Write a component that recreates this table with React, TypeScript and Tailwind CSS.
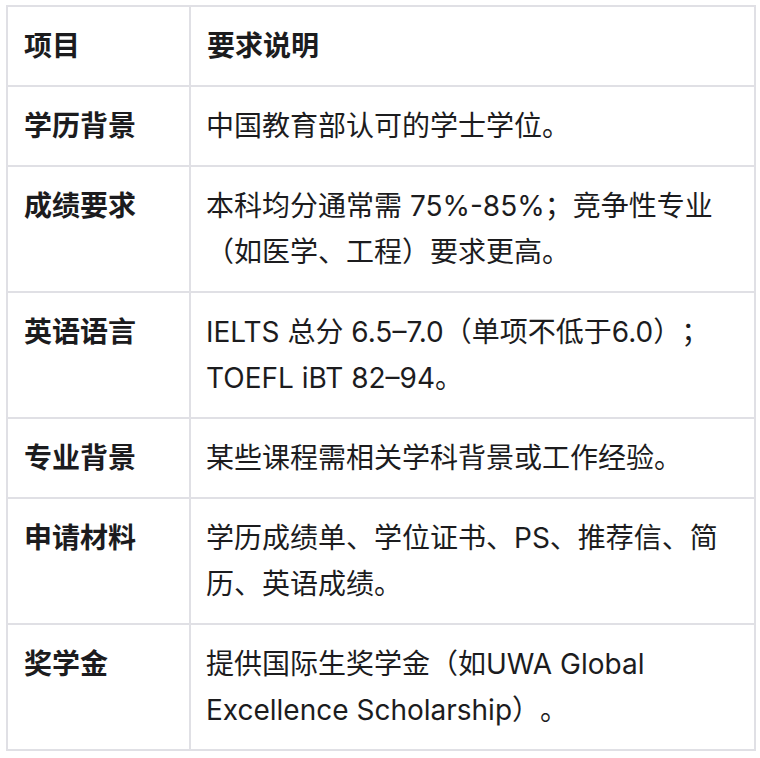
import * as React from "react";

const rows: [string, string][] = [
  ["学历背景", "中国教育部认可的学士学位。"],
  ["成绩要求", "本科均分通常需 75%-85%；竞争性专业（如医学、工程）要求更高。"],
  ["英语语言", "IELTS 总分 6.5–7.0（单项不低于6.0）；TOEFL iBT 82–94。"],
  ["专业背景", "某些课程需相关学科背景或工作经验。"],
  ["申请材料", "学历成绩单、学位证书、PS、推荐信、简历、英语成绩。"],
  ["奖学金", "提供国际生奖学金（如UWA Global Excellence Scholarship）。"],
];

const cell = "border-2 border-[#e0e0e5] px-4 py-4 align-top text-left";

export default function App() {
  return (
    <div
      className="bg-white pl-[6px] pt-[5px] text-[28px] leading-[46px] text-[#1c1c1e] [text-spacing-trim:space-all]"
      style={{ fontFamily: '"Inter", "Noto Sans CJK SC", sans-serif' }}
    >
      <table className="w-[750px] border-collapse table-fixed">
        <colgroup>
          <col className="w-[183px]" />
          <col />
        </colgroup>
        <thead>
          <tr>
            <th className={`${cell} font-bold`}>项目</th>
            <th className={`${cell} font-bold`}>要求说明</th>
          </tr>
        </thead>
        <tbody>
          {rows.map(([k, v]) => (
            <tr key={k}>
              <td className={`${cell} font-bold`}>{k}</td>
              <td className={`${cell} pl-[15px] font-normal`}>{v}</td>
            </tr>
          ))}
        </tbody>
      </table>
    </div>
  );
}
